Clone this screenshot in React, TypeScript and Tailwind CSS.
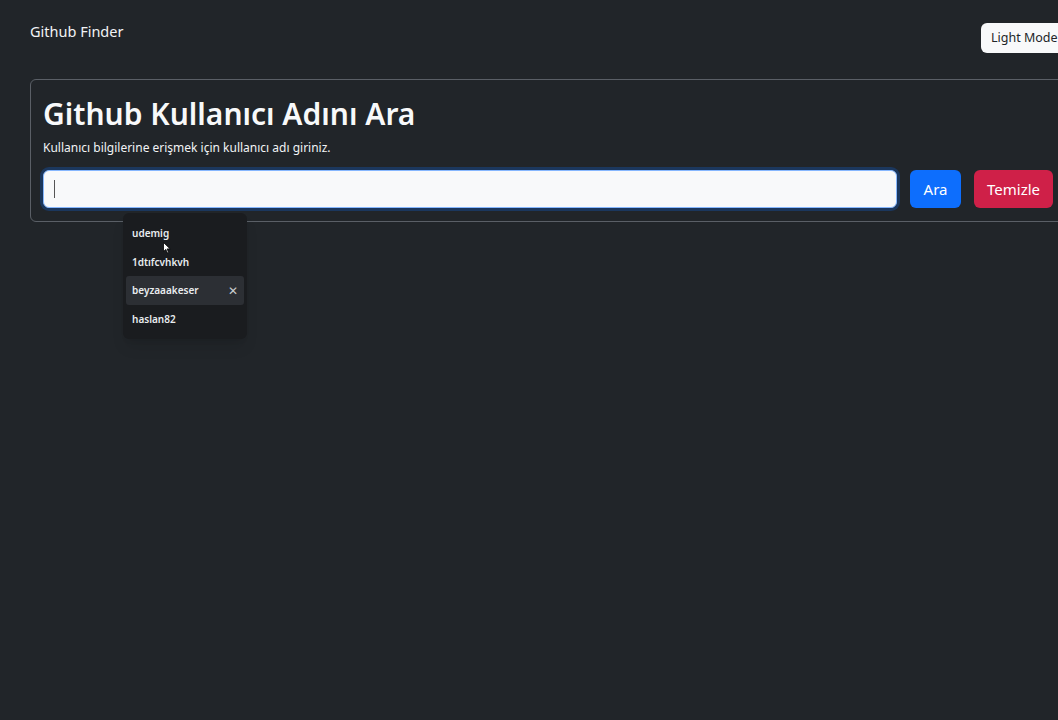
import React from "react";

const history = ["udemig", "1dtıfcvhkvh", "beyzaaakeser", "haslan82"];

function Suggestions() {
  return (
    <div className="absolute left-[80px] top-[43px] w-[124px] rounded-md bg-[#1a1c1f] pt-[6px] pb-[5px] px-[3px] shadow-lg">
      {history.map((item, i) => (
        <div
          key={item}
          className={
            "flex h-[28.7px] items-center justify-between rounded-[3px] px-[6px] text-[10px] font-semibold text-[#e9ecef] " +
            (i === 2 ? "bg-[#2c2f34]" : "")
          }
        >
          <span>{item}</span>
          {i === 2 && <span className="text-[12px] font-normal text-[#c9ccd0]">✕</span>}
        </div>
      ))}
    </div>
  );
}

function Cursor() {
  return (
    <svg className="absolute left-[163px] top-[242px]" width="8" height="12" viewBox="0 0 8 12">
      <path d="M0.5 0.5 L0.5 9.5 L2.8 7.4 L4.4 11 L5.6 10.4 L4.1 6.9 L7.2 6.9 Z" fill="#fff" stroke="#000" strokeWidth="0.8" />
    </svg>
  );
}

export default function App() {
  return (
    <div className="relative h-screen w-full overflow-hidden bg-[#212529] font-['Noto_Sans',sans-serif] text-[#dee2e6]">
      <div className="w-[1110px] px-[30px]">
        {/* Navbar */}
        <div className="flex items-start justify-between pt-[21px]">
          <span className="text-[14.5px] text-[#f1f3f5]">Github Finder</span>
          <button className="mt-[2px] h-[30px] w-[99px] rounded-md bg-[#f8f9fa] pl-[10px] text-left text-[12.5px] text-[#212529]">
            Light Mode
          </button>
        </div>

        {/* Search card */}
        <div className="mt-[26px] rounded-md border border-[#5a5f66] px-[12px] pt-[14px] pb-[13px]">
          <h1 className="text-[30px] leading-[40px] font-semibold text-[#f8f9fa]">Github Kullanıcı Adını Ara</h1>
          <p className="mt-[5px] text-[12px] text-[#f1f3f5]">Kullanıcı bilgilerine erişmek için kullanıcı adı giriniz.</p>
          <div className="relative mt-[13px] flex gap-[13px]">
            <div className="flex h-[38px] w-[854px] items-center rounded-md border border-[#86b7fe] bg-[#f8f9fa] px-[10px] shadow-[0_0_0_3px_rgba(13,110,253,0.25)]">
              <span className="h-[18px] w-[1px] bg-[#555]" />
            </div>
            <button className="h-[38px] w-[51px] rounded-md bg-[#0d6efd] text-[15px] text-white">Ara</button>
            <button className="h-[38px] w-[79px] rounded-md bg-[#cf2048] text-[15px] text-white">Temizle</button>
            <Suggestions />
          </div>
        </div>
      </div>
      <Cursor />
    </div>
  );
}
